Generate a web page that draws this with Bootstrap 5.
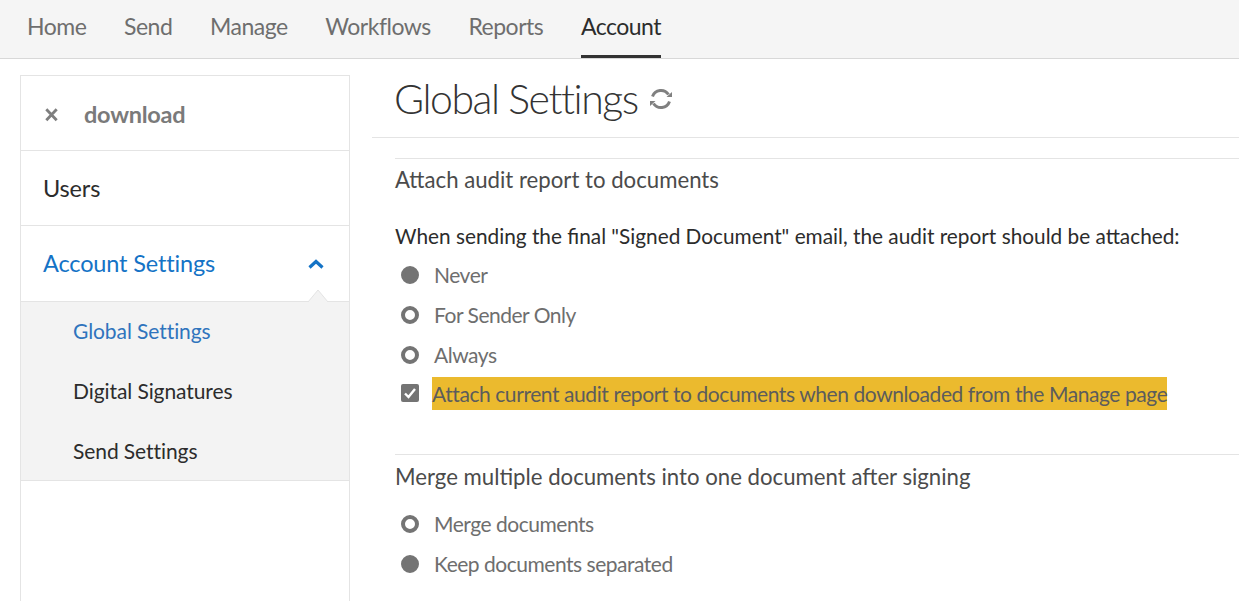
<!doctype html>
<html lang="en"><head><meta charset="utf-8"><title>Global Settings</title>
<link href="https://cdn.jsdelivr.net/npm/bootstrap@5.3.0/dist/css/bootstrap.min.css" rel="stylesheet">
<style>
html,body{height:601px;overflow:hidden}
body{font-family:Lato,"Open Sans",sans-serif;color:#4b4b4b;background:#fff}
.topbar{height:59px;background:#f5f5f5;border-bottom:1px solid #d8d8d8;padding-left:27px;gap:37.7px}
.toplink{font-size:23px;letter-spacing:-.5px;line-height:53px;height:58px;color:#6e6e6e;text-decoration:none;display:block}
.toplink.on{color:#2c2c2c;border-bottom:3px solid #323232}
.shell{height:542px}
.sidepane{width:330px;margin:16px 0 0 20px;border:1px solid #e4e4e4;border-bottom:0;flex:none}
.sideitem{height:75px;padding-left:22px;border-bottom:1px solid #e4e4e4;font-size:23.5px;letter-spacing:-.15px;color:#2c2c2c}
.sideitem.close{color:#7a7a7a;font-weight:700;padding-top:4px;letter-spacing:-.25px}
.sideitem.plain{padding-top:2px}
.sideitem.open{color:#1473c6;height:76px;justify-content:space-between;padding-right:24px;position:relative}
.notch{position:absolute;right:21px;bottom:-1px;width:20px;height:14px;overflow:visible}
.subgroup{background:#f3f3f3;border-bottom:1px solid #e4e4e4;height:179px;padding:0 0 0 52px}
.subitem{font-size:21px;height:60px;color:#2c2c2c;letter-spacing:-.08px;padding-bottom:2px}
.subitem.on{color:#2f74bd}
.mainpane{flex:1;margin-left:22px;min-width:0}
.pagehead{height:64px;border-bottom:1px solid #e4e4e4;padding:0 0 14px 22px;margin-top:15px;font-size:41px;letter-spacing:-1.45px;font-weight:300;color:#333;gap:11px;line-height:48px}
.pagebody{padding-left:23px}
.blockrule{border-top:1px solid #e4e4e4}
.firstrule{margin-top:20px;margin-bottom:12px}
.firstrule .blockhead{margin-top:-1px}
.blockhead{font-size:22.2px;color:#4b4b4b;line-height:44px}
.question{font-size:20.8px;color:#2c2c2c;line-height:30px;margin-top:19px;margin-bottom:4px}
.optrow{height:40px;font-size:21px;letter-spacing:-.48px;color:#6e6e6e;gap:15px;padding-left:6px}
.optrow.shortrow{margin-top:-2px}
.dot{width:18px;height:18px;border-radius:50%;border:4px solid #747474;background:#fff;flex:none}
.dot.full{background:#747474}
.boxmark{width:18px;height:18px;flex:none}
.hilite{background:#ebba2e;color:#5c5c5c;line-height:33px;margin-left:-2px;letter-spacing:-.42px}
.secondrule{margin-top:41px}
.afterhead{margin-top:5px}
</style></head><body>
<nav class="topbar d-flex align-items-start">
<a class="toplink" href="#">Home</a><a class="toplink" href="#">Send</a><a class="toplink" href="#">Manage</a><a class="toplink" href="#">Workflows</a><a class="toplink" href="#">Reports</a><a class="toplink on" href="#">Account</a>
</nav>
<div class="shell d-flex">
<aside class="sidepane">
<div class="sideitem close d-flex align-items-center gap-3"><svg width="17" height="16" viewBox="0 0 18 16"><path d="M3.500 2 14.500 13.500M14.500 2 3.500 13.500" stroke="#7f7f7f" stroke-width="3"/></svg><span class="ms-2">download</span></div>
<div class="sideitem plain d-flex align-items-center">Users</div>
<div class="sideitem open d-flex align-items-center"><span>Account Settings</span><svg width="18" height="12" viewBox="0 0 18 12"><path d="M2.500 9.500 9 3.500 15.500 9.500" fill="none" stroke="#1473c6" stroke-width="3.200"/></svg>
<svg class="notch" viewBox="0 0 20 14"><path d="M0 14 10 2 20 14Z" fill="#f3f3f3"/><path d="M0 14 10 2 20 14" fill="none" stroke="#e4e4e4"/></svg></div>
<div class="subgroup"><div class="subitem on d-flex align-items-center">Global Settings</div><div class="subitem d-flex align-items-center">Digital Signatures</div><div class="subitem d-flex align-items-center">Send Settings</div></div>
</aside>
<main class="mainpane">
<div class="pagehead d-flex align-items-center"><span>Global Settings</span><svg width="24" height="24" viewBox="0 0 24 24"><path d="M3.500 9.500A9 9 0 0 1 19.500 7.500M20.500 14.500A9 9 0 0 1 4.500 16.500" fill="none" stroke="#808080" stroke-width="3"/><path d="M17.500 10H23V5ZM6.500 14H1V19Z" fill="#808080"/></svg></div>
<div class="pagebody">
<div class="blockrule firstrule"><div class="blockhead">Attach audit report to documents</div></div>
<div class="question">When sending the final "Signed Document" email, the audit report should be attached:</div>
<div class="optrow d-flex align-items-center"><span class="dot full"></span>Never</div>
<div class="optrow d-flex align-items-center"><span class="dot"></span>For Sender Only</div>
<div class="optrow d-flex align-items-center"><span class="dot"></span>Always</div>
<div class="optrow shortrow d-flex align-items-center"><svg class="boxmark" viewBox="0 0 18 18"><rect width="18" height="18" rx="2" fill="#747474"/><path d="M4 9.500 7.500 13 14 5" fill="none" stroke="#fff" stroke-width="2.400"/></svg><span class="hilite">Attach current audit report to documents when downloaded from the Manage page</span></div>
<div class="blockrule secondrule"><div class="blockhead">Merge multiple documents into one document after signing</div></div>
<div class="optrow afterhead d-flex align-items-center"><span class="dot"></span>Merge documents</div>
<div class="optrow d-flex align-items-center"><span class="dot full"></span>Keep documents separated</div>
</div>
</main>
</div>
</body></html>
